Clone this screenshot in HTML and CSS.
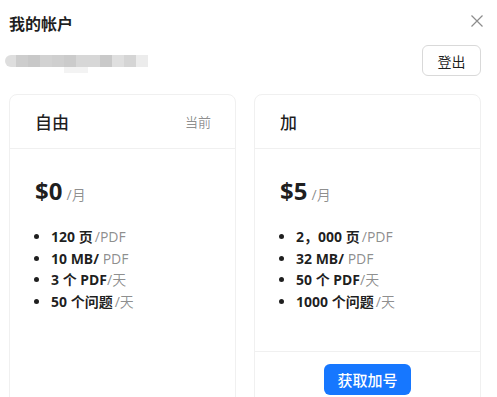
FILE: index.html
```html
<!DOCTYPE html>
<html lang="zh">
<head>
<meta charset="utf-8">
<link rel="stylesheet" href="styles.css">
</head>
<body>
<div class="modal">
  <div class="title-row">
    <div class="title">我的帐户</div>
    <svg class="close" width="12" height="12" viewBox="0 0 12 12"><path d="M0.5 0.5L11.5 11.5M11.5 0.5L0.5 11.5" stroke="#8c8c8c" stroke-width="1.2" fill="none"/></svg>
  </div>
  <div class="account-row">
    <div class="blur">
      <div class="blur-bar">
        <span class="s1"></span><span class="s2"></span><span class="s3"></span><span class="s4"></span><span class="s5"></span><span class="s6"></span><span class="s7"></span><span class="s8"></span><span class="s9"></span><span class="s10"></span><span class="s11"></span><span class="s12"></span>
      </div>
      <div class="blur-tail"></div>
    </div>
    <button class="logout">登出</button>
  </div>
  <div class="plans">
    <div class="card">
      <div class="card-head">
        <span class="plan-name">自由</span>
        <span class="current">当前</span>
      </div>
      <div class="card-body">
        <div class="price">$0<span class="per">/月</span></div>
        <ul class="features">
          <li><b>120 页</b><span class="unit gap">/PDF</span></li>
          <li><b>10 MB/</b> <span class="unit">PDF</span></li>
          <li><b>3 个 PDF</b><span class="unit">/天</span></li>
          <li><b>50 个问题</b><span class="unit gap">/天</span></li>
        </ul>
      </div>
    </div>
    <div class="card">
      <div class="card-head">
        <span class="plan-name">加</span>
      </div>
      <div class="card-body">
        <div class="price">$5<span class="per">/月</span></div>
        <ul class="features">
          <li><b>2，000 页</b><span class="unit gap">/PDF</span></li>
          <li><b>32 MB/</b> <span class="unit">PDF</span></li>
          <li><b>50 个 PDF</b><span class="unit">/天</span></li>
          <li><b>1000 个问题</b><span class="unit gap">/天</span></li>
        </ul>
      </div>
      <div class="card-foot">
        <button class="upgrade">获取加号</button>
      </div>
    </div>
  </div>
</div>
</body>
</html>
```
FILE: styles.css
```css
html, body {
  margin: 0;
  padding: 0;
  background: #fff;
  overflow: hidden;
}
body {
  font-family: "Noto Sans", "Noto Sans CJK SC", sans-serif;
  color: rgba(0, 0, 0, 0.88);
}
.modal {
  padding: 14px 16px 0 9px;
}
.title-row {
  display: flex;
  justify-content: space-between;
  align-items: flex-start;
  height: 20px;
}
.title {
  font-size: 16px;
  line-height: 20px;
  font-weight: 600;
}
.close {
  margin-top: 1px;
  margin-right: -2px;
}
.account-row {
  display: flex;
  justify-content: space-between;
  align-items: center;
  margin-top: 11px;
}
.blur {
  margin-left: -4px;
  position: relative;
  height: 12px;
}
.blur-bar {
  display: flex;
  height: 12px;
}
.blur-bar span {
  width: 12px;
  height: 12px;
}
.blur-bar .s1 { width: 11px; background: #dedede; border-radius: 6px 0 0 6px; }
.blur-bar .s2 { background: #cdcdcd; }
.blur-bar .s3 { background: #c8c8c8; }
.blur-bar .s4 { background: #d2d2d2; }
.blur-bar .s5 { background: #cfcfcf; }
.blur-bar .s6 { background: #cbcbcb; }
.blur-bar .s7 { background: #d7d7d7; }
.blur-bar .s8 { background: #d7d7d7; }
.blur-bar .s9 { background: #c9c9c9; }
.blur-bar .s10 { background: #dfdfdf; }
.blur-bar .s11 { background: #d5d5d5; }
.blur-bar .s12 { background: #ececec; }
.blur-tail {
  position: absolute;
  left: 59px;
  top: 12px;
  width: 24px;
  height: 6px;
  background: #f3f3f3;
}
.logout {
  width: 59px;
  height: 31px;
  border: 1px solid #d9d9d9;
  border-radius: 6px;
  background: #fff;
  font-family: inherit;
  font-size: 14px;
  color: rgba(0, 0, 0, 0.88);
  padding: 0;
}
.plans {
  display: grid;
  grid-template-columns: 1fr 1fr;
  gap: 18px;
  margin-top: 18px;
}
.card {
  border: 1px solid #f0f0f0;
  border-radius: 8px;
  display: flex;
  flex-direction: column;
}
.card-head {
  height: 53px;
  padding: 0 24px 0 25px;
  display: flex;
  justify-content: space-between;
  align-items: center;
  border-bottom: 1px solid #f0f0f0;
}
.plan-name {
  font-size: 17px;
  font-weight: 500;
}
.current {
  font-size: 13px;
  color: rgba(0, 0, 0, 0.45);
}
.card-body {
  padding: 26px 25px 39px;
  flex: 1;
}
.price {
  font-size: 24px;
  line-height: 32px;
  font-weight: 700;
}
.per {
  font-size: 14px;
  font-weight: 400;
  color: rgba(0, 0, 0, 0.45);
  margin-left: 4px;
}
.features {
  margin: 15px 0 0;
  padding-left: 16px;
  font-size: 14px;
  line-height: 21.5px;
}
.features b {
  font-weight: 700;
}
.unit {
  color: rgba(0, 0, 0, 0.45);
}
.unit.gap {
  margin-left: 2px;
}
.card-foot {
  border-top: 1px solid #f0f0f0;
  padding: 12px 0;
  display: flex;
  justify-content: center;
}
.upgrade {
  width: 87px;
  height: 31px;
  border: none;
  border-radius: 6px;
  background: #1677ff;
  color: #fff;
  font-family: inherit;
  font-size: 15px;
  font-weight: 500;
  padding: 0;
}
```
